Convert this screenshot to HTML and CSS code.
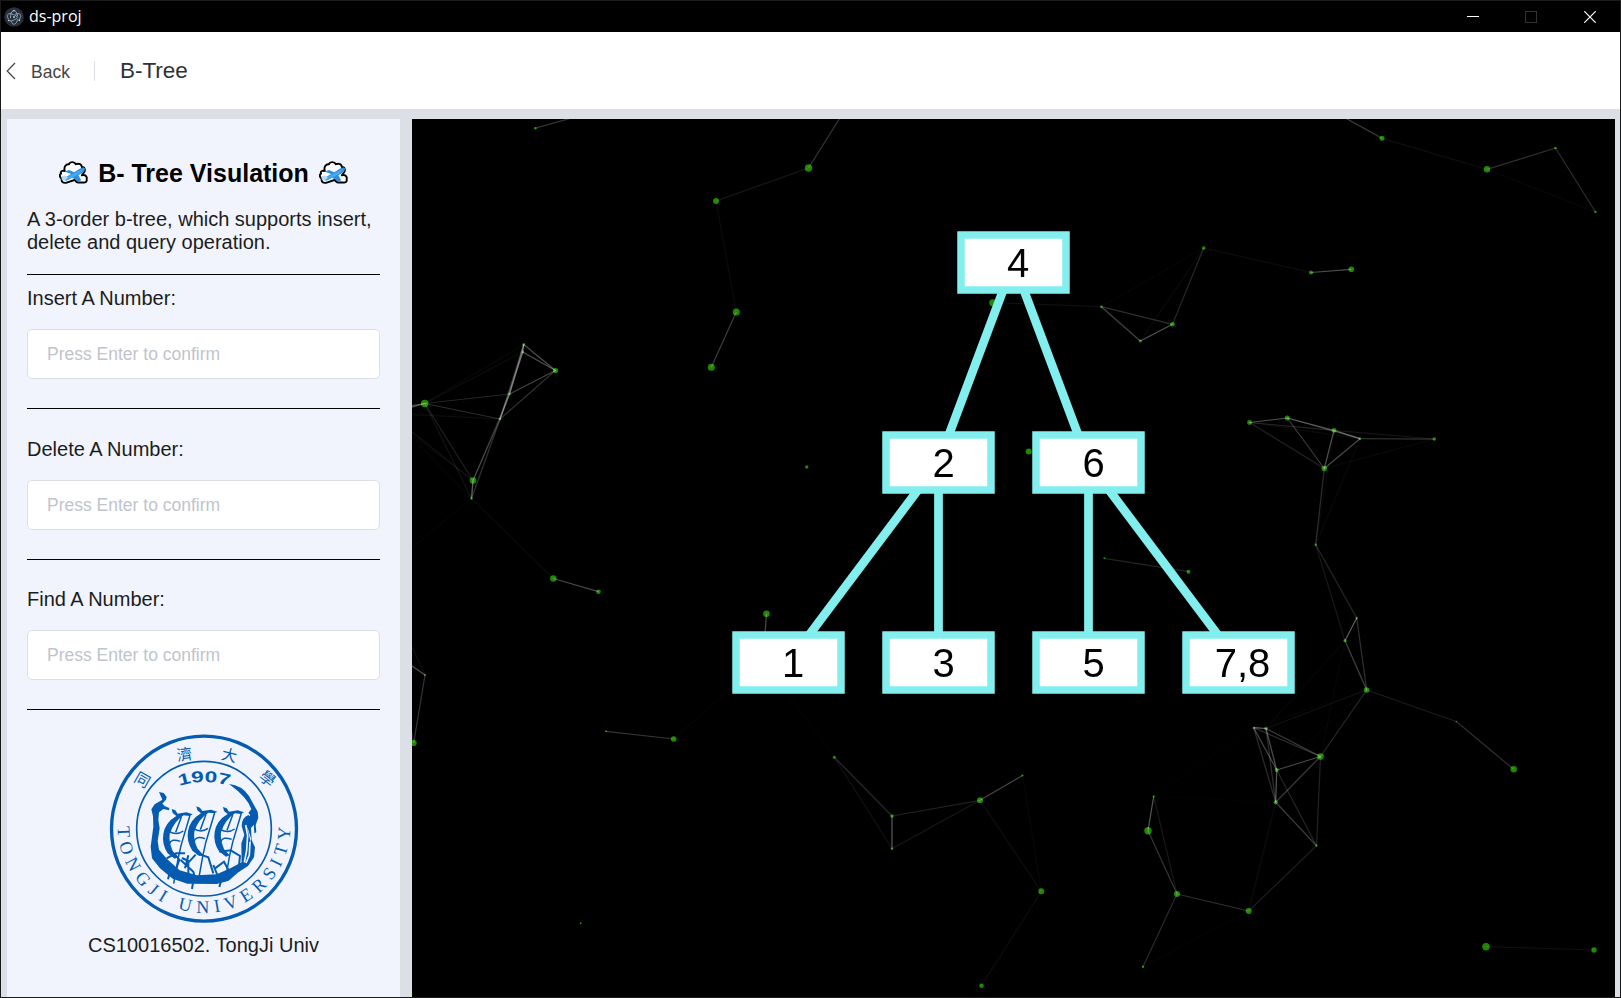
FILE: index.html
```html
<!DOCTYPE html>
<html lang="en">
<head>
<meta charset="utf-8">
<title>ds-proj</title>
<link rel="stylesheet" href="styles.css">
</head>
<body>
<svg width="0" height="0" class="defs">
  <symbol id="plane" viewBox="0 0 84 66">
    <path d="M17 29C13 17 20 8 29 9C32 1 45 1 49 9C58 5 66 10 66 17C76 17 78 29 70 36L66 41C78 38 82 46 80 53C82 60 76 63 70 62H56C50 62 48 58 47 54L20 63C10 64 6 58 8 51C1 46 1 38 6 36C3 29 11 26 17 29Z" fill="#fff" stroke="#000" stroke-width="5.5" stroke-linejoin="round"/>
    <path d="M16 30L29 26L44 32L60 22Q72 15 76 22Q76 29 66 35L56 41L64 55L58 61L39 48L22 56L8 54L24 44L35 37Z" fill="#2f8fdf"/>
    <path d="M9 54L52 31L72 22L57 37L23 56Z" fill="#4aa9ee"/>
    <path d="M7 44L18 42L26 47L18 55L8 54Z" fill="#b9dcf3"/>
  </symbol>
  <symbol id="sail" viewBox="0 0 120 240" overflow="visible">
    <path d="M22 6L33 10L40 20L66 16L85 22L76 27L58 25Q27 45 16 82Q13 104 25 132L42 151L31 155L10 139Q-8 111 -3 81Q2 47 36 27L25 18Z" fill="currentColor"/>
    <path d="M77 25L51 112L42 151L28 230M14 73Q36 87 57 72M15 111Q21 93 48 103M34 76L51 30" fill="none" stroke="currentColor" stroke-width="4.5"/>
  </symbol>
</svg>
<div class="window">
  <header class="titlebar">
    <svg class="app-icon" viewBox="0 0 20 20">
      <circle cx="10" cy="10" r="9.8" fill="#2b2e3a"/>
      <g fill="none" stroke="#8fb4bf" stroke-width=".9">
        <path d="M4.600 12.200C2.600 9.500 3 7.100 5.200 6.700C7.600 6.300 11.500 8 14.200 10.700M15.400 12.200C17.400 9.500 17 7.100 14.800 6.700C13.800 6.500 12.500 6.700 11.200 7.200M7.200 14.200C8 16.900 9.900 18 11.500 16.600C12.500 15.800 13.200 14.200 13.500 12.200M5.800 13.900C8 14.200 11 12.900 13.200 10.800M6.600 11.200C6.200 7.800 7.300 4.200 9.400 3.600M10.900 3.800C12.300 4.600 13.300 6.700 13.500 9"/>
      </g>
      <circle cx="10" cy="10" r=".9" fill="#b5d6df"/>
      <circle cx="4.800" cy="13.300" r=".9" fill="#b5d6df"/><circle cx="15.300" cy="13.200" r=".9" fill="#b5d6df"/><circle cx="10" cy="3.600" r=".9" fill="#b5d6df"/>
    </svg>
    <span class="app-name">ds-proj</span>
    <div class="controls">
      <svg viewBox="0 0 12 12"><path d="M0 5.500H12" stroke="#fff"/></svg>
      <svg viewBox="0 0 12 12"><rect x=".5" y=".5" width="11" height="11" fill="none" stroke="#333"/></svg>
      <svg viewBox="0 0 12 12"><path d="M.3 .3L11.700 11.700M11.700 .3L.3 11.700" stroke="#fff" stroke-width="1.2"/></svg>
    </div>
  </header>
  <nav class="page-header">
    <svg class="back-icon" viewBox="0 0 10 18"><path d="M9 1L1.200 9L9 17" fill="none" stroke="#444" stroke-width="1.2"/></svg>
    <span class="back">Back</span>
    <i class="divider"></i>
    <span class="page-title">B-Tree</span>
  </nav>
  <main class="content">
    <aside class="sidebar">
      <h2><svg class="plane"><use href="#plane"/></svg><span>B- Tree Visulation</span><svg class="plane"><use href="#plane"/></svg></h2>
      <p class="intro">A 3-order b-tree, which supports insert,<br>delete and query operation.</p>
      <section class="field first"><label>Insert A Number:</label><input placeholder="Press Enter to confirm"></section>
      <section class="field"><label>Delete A Number:</label><input placeholder="Press Enter to confirm"></section>
      <section class="field last"><label>Find A Number:</label><input placeholder="Press Enter to confirm"></section>
      <svg class="seal" viewBox="0 0 630 627">
        <circle cx="312" cy="311" r="277.500" fill="none" stroke="currentColor" stroke-width="10"/>
        <circle cx="312" cy="311" r="202" fill="none" stroke="currentColor" stroke-width="5"/>
        <path id="ring" d="M53 305A259 259 0 0 0 571 305" fill="none"/>
        <path id="year" d="M238 183Q312 159 390 183" fill="none"/>
        <text class="ring-text"><textPath href="#ring" textLength="811">TONGJI UNIVERSITY</textPath></text>
        <text class="year-text"><textPath href="#year" textLength="152" lengthAdjust="spacingAndGlyphs">1907</textPath></text>
        <g class="seal-cjk">
          <text transform="translate(128 163) rotate(30)" y="18">同</text>
          <text transform="translate(253 85) rotate(-8)" y="20">濟</text>
          <text transform="translate(388 91) rotate(14)" y="16">大</text>
          <text transform="translate(503 160) rotate(38)" y="18">學</text>
        </g>
        <g fill="currentColor">
          <path d="M177 201L191 204L200 216L198 224L187 236L195 244L208 249L207 256L190 252L177 262L175 285L179 310L173 348L177 374L201 402L239 436L290 451L350 448L391 430L425 412L452 382L453 340L440 300L444 278L456 264L469 270L463 298L453 309L455 345L465 367L462 397L444 423L415 442L386 467L350 477L262 476L218 461L180 430L156 400L152 365L160 305L159 274L154 253L164 238L187 224Z"/>
          <path d="M387 177Q426 181 447 213L473 260L475 278L467 300L469 322L463 325L460 280L445 264L454 252Q442 217 387 177Z"/>
          <path d="M445 270Q425 278 425 303L433 330L424 355L425 415L444 421L456 393L452 350L442 310L455 278Z"/>
        </g>
        <path d="M437 300L443 332L440 376L433 412M450 350L448 390L438 414" fill="none" stroke="#f1f4fd" stroke-width="5"/>
        <g fill="none" stroke="currentColor" stroke-width="6">
          <path d="M200 400L228 385H255M225 389L238 404L224 445M242 405L280 440L284 455M265 391L255 430M290 385L325 397L340 445M287 389L260 418M345 430L372 410L388 440M358 380L392 376L420 393L415 440M340 420L352 450M246 399L265 408L265 446M210 440L204 463M280 466L276 492M365 462L358 486"/>
        </g>
        <use href="#sail" x="193" y="246" width="120" height="240"/>
        <use href="#sail" x="267" y="238" width="120" height="240"/>
        <use href="#sail" x="347" y="240" width="120" height="240"/>
      </svg>
      <p class="caption">CS10016502. TongJi Univ</p>
    </aside>
    <div class="stage">
      <canvas id="particles" width="1203" height="878"></canvas>
      <svg class="tree" viewBox="412 119 1203 878">
        <path class="edges" d="M1013.500 262.500L938.500 462.500M1013.500 262.500L1088.500 462.500M938.500 462.500L788.500 662.500M938.500 462.500V662.500M1088.500 462.500V662.500M1088.500 462.500L1238.500 662.500"/>
        <g class="nodes">
          <rect x="961" y="235" width="105" height="55"/>
          <rect x="886" y="435" width="105" height="55"/><rect x="1036" y="435" width="105" height="55"/>
          <rect x="736" y="635" width="105" height="55"/><rect x="886" y="635" width="105" height="55"/><rect x="1036" y="635" width="105" height="55"/><rect x="1186" y="635" width="105" height="55"/>
        </g>
        <g class="keys">
          <text x="1018" y="277">4</text><text x="943.500" y="477">2</text><text x="1093.500" y="477">6</text>
          <text x="793" y="677">1</text><text x="943.500" y="677">3</text><text x="1093.500" y="677">5</text><text x="1242.500" y="677">7,8</text>
        </g>
      </svg>
    </div>
  </main>
</div>
<script src="particles.js"></script>
</body>
</html>
```

FILE: styles.css
```css
* { box-sizing: border-box; }
body { margin: 0; background: #1a1a1a; font-family: "Liberation Sans", Arial, sans-serif; }
.defs { position: absolute; }
.window { width: 1621px; height: 998px; border: 1px solid #1a1a1a; display: flex; flex-direction: column; overflow: hidden; background: #dcdfe6; }
.titlebar { height: 31px; background: #000; display: flex; align-items: center; padding-left: 3px; flex: none; }
.app-icon { width: 20px; height: 20px; }
.app-name { margin-left: 5px; color: #fff; font: 16px/31px "Open Sans", sans-serif; }
.controls { margin-left: auto; display: flex; padding-right: 24px; }
.controls svg { width: 12px; height: 12px; display: block; margin-left: 46px; }
.controls svg:last-child { margin-left: 47px; }
.page-header { height: 77px; flex: none; background: #fff; display: flex; align-items: center; padding: 1px 0 0 5px; }
.back-icon { width: 10px; height: 18px; }
.back { margin-left: 15px; font-size: 17.500px; color: #454545; line-height: 20px; padding-top: 1px; }
.divider { width: 1px; height: 20px; background: #dcdfe6; margin: 0 25px 0 24px; }
.page-title { font-size: 22.500px; color: #303133; line-height: 26px; }
.content { flex: 1; display: flex; gap: 12px; padding: 10px 5px 0 6px; min-height: 0; }
.sidebar { width: 393px; background: #f1f4fd; padding: 39px 20px 0; flex: none; }
h2 { margin: 0 0 20px; font-size: 25px; line-height: 30px; height: 30px; display: flex; justify-content: center; align-items: center; gap: 10px; }
.plane { width: 29px; height: 23px; flex: none; position: relative; top: -1px; }
.intro { margin: 0; height: 67px; font-size: 20px; line-height: 23px; color: #1c1c1c; white-space: nowrap; border-bottom: 1px solid #000; }
.field { height: 151px; padding-top: 29px; border-bottom: 1px solid #000; display: flex; flex-direction: column; gap: 19px; }
.field.first { height: 134px; padding-top: 12px; }
.field.last { height: 150px; padding-top: 28px; }
label { font-size: 20px; line-height: 23px; color: #1c1c1c; }
input { width: 100%; height: 50px; border: 1px solid #dcdfe6; border-radius: 5px; background: #fff; padding: 0 19px; font: 17.500px "Liberation Sans", Arial, sans-serif; outline: none; }
input::placeholder { color: #c0c4cc; opacity: 1; }
.seal { display: block; width: 210px; height: 209px; margin: 15px 0 0 73px; color: #045bb0; }
.ring-text { font: 54px "Liberation Serif", serif; fill: currentColor; }
.year-text { font: bold 47px "Liberation Sans", sans-serif; fill: currentColor; }
.seal-cjk text { font: 46px "Noto Sans CJK TC", sans-serif; text-anchor: middle; fill: currentColor; }
.caption { margin: 0; text-align: center; font-size: 20px; line-height: 23px; color: #1c1c1c; }
.stage { flex: 1; display: grid; background: #000; }
.stage > * { grid-area: 1 / 1; width: 1203px; height: 878px; display: block; }
.edges { fill: none; stroke: #82eeee; stroke-width: 8.750; }
.nodes rect { fill: #fff; stroke: #82eeee; stroke-width: 7.500; }
.keys text { font-size: 40px; text-anchor: middle; fill: #000; }
```

FILE: particles.js
```js
// Each particle is [x, y, radius] in window coordinates.
const particles = [
  [535.3,128.2,1.3],[600,110,1],[808.5,168,3.7],[845,110,2],[716,201,3],[736.3,312,3.5],[711.3,367.3,3.5],
  [523.7,344.5,1.4],[522.7,352,1.4],[555.5,370.5,2.6],[509.5,394,1.3],[500,419,1.3],[424.7,403.5,3.7],
  [473,480.5,3.3],[471.5,498.5,1.2],[380,411,1],[389,413.5,1],[806.7,467,1.7],[992.7,302.7,3.5],
  [1101.3,306.7,1.3],[1172.5,324.3,2.3],[1140.3,341,1.5],[1203.7,248,1.8],[1028.7,451.5,3],
  [1382,138.3,2.5],[1330,109.5,1],[1487,169.3,3.2],[1555.5,148,1.3],[1595.5,212,1.2],[1311,272.5,2.1],
  [1351.3,269.3,2.8],[1249.5,422.5,2.4],[1287.3,418,2.5],[1334,430.3,2.4],[1360,438.7,1.2],
  [1434.3,439,1.7],[1324.3,468.5,2.8],[553.3,578.5,3.2],[598.5,591.7,2.3],[766.5,613.7,3.3],[763,660,2],
  [425,675,1],[395,654,1],[379,575,1],[413.7,743,3],[606,731.3,1],[673.7,739,2.8],[580.7,923.3,1],
  [1104.3,558.3,1],[1188.5,571.7,2],[834.3,757.3,1.5],[892,816,1.8],[892,848.7,1.2],[980,800.3,3],
  [1022.5,775.5,1.1],[1041.3,891.3,3],[981.5,985.7,2.3],[1153.7,796.3,1.1],[1148,830.7,3.7],
  [1177,894,3],[1143,966.7,1.2],[1315.7,544.7,1.2],[1356.7,618,1.2],[1345,640.7,1.6],[1366.7,690,2.8],
  [1253.7,727.7,1.1],[1266,728.5,1.8],[1320.5,756.5,3.3],[1276.7,770,2],[1275.7,802.3,2.1],
  [1316.5,845.7,1.1],[1248.7,911,3],[1456.3,721.5,0.8],[1513.7,769.3,3.2],[1486,946.7,3.7],[1594,950,2.7]
];
const LINK_DISTANCE = 125;
const LINK_OPACITY = 0.45;
const ctx = document.getElementById('particles').getContext('2d');
ctx.translate(-412, -119);
ctx.fillStyle = '#1f8800';
for (const [x, y, r] of particles) {
  ctx.beginPath();
  ctx.arc(x, y, r, 0, Math.PI * 2);
  ctx.fill();
}
ctx.lineWidth = 1.25;
particles.forEach((a, i) => {
  for (const b of particles.slice(i + 1)) {
    const d = Math.hypot(a[0] - b[0], a[1] - b[1]);
    if (d >= LINK_DISTANCE) continue;
    ctx.strokeStyle = `rgba(255,255,255,${LINK_OPACITY * (1 - d / LINK_DISTANCE)})`;
    ctx.beginPath();
    ctx.moveTo(a[0], a[1]);
    ctx.lineTo(b[0], b[1]);
    ctx.stroke();
  }
});
```
